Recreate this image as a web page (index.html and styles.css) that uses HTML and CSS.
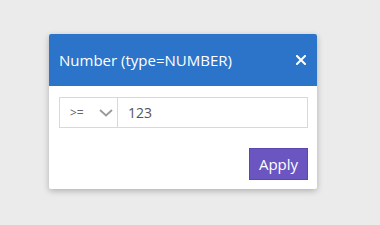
FILE: index.html
```html
<!DOCTYPE html>
<html>
<head>
<meta charset="utf-8">
<link rel="stylesheet" href="styles.css">
</head>
<body>
<div class="dialog">
  <div class="header">
    <span class="title">Number (type=NUMBER)</span>
    <svg class="close" width="10" height="10" viewBox="0 0 10 10"><path d="M1 1L9 9M9 1L1 9" stroke="#fff" stroke-width="2" stroke-linecap="square"/></svg>
  </div>
  <div class="content">
    <div class="field">
      <div class="select">
        <span class="op">&gt;=</span>
        <svg class="chev" width="14" height="8" viewBox="0 0 14 8"><path d="M1 1L7 6.5L13 1" fill="none" stroke="#999" stroke-width="1.8"/></svg>
      </div>
      <div class="value">123</div>
    </div>
    <div class="actions">
      <button class="apply">Apply</button>
    </div>
  </div>
</div>
</body>
</html>
```
FILE: styles.css
```css
html, body { margin: 0; padding: 0; }
body {
  background: #ebebeb;
  width: 380px;
  height: 225px;
  font-family: "Open Sans", "Noto Sans", sans-serif;
  overflow: hidden;
}
.dialog {
  margin: 34px 0 0 49px;
  width: 268px;
  background: #fff;
  box-shadow: 0 2px 6px rgba(0,0,0,0.25);
  border-radius: 2px;
}
.header {
  height: 52px;
  background: #2b74c9;
  display: flex;
  align-items: center;
  justify-content: space-between;
  padding: 0 11px 0 10px;
  border-radius: 2px 2px 0 0;
}
.title {
  color: #fff;
  font-size: 15px;
  line-height: 20px;
}
.close { display: block; }
.content {
  padding: 11px 9px 9px 10px;
}
.field {
  display: flex;
  height: 31px;
  border: 1px solid #d9d9d9;
  box-sizing: border-box;
}
.select {
  width: 58px;
  border-right: 1px solid #d9d9d9;
  display: flex;
  align-items: center;
  padding-left: 10px;
  gap: 15px;
  box-sizing: border-box;
}
.op {
  color: #666;
  font-size: 12px;
}
.chev { display: block; }
.value {
  display: flex;
  align-items: center;
  padding-left: 10px;
  font-size: 14px;
  color: #555;
}
.actions {
  display: flex;
  justify-content: flex-end;
  margin-top: 20px;
}
.apply {
  width: 59px;
  height: 32px;
  background: #6a55c1;
  border: 1px solid #5b47b0;
  color: #fff;
  font-family: "Open Sans", "Noto Sans", sans-serif;
  font-size: 15px;
  padding: 0;
  border-radius: 0;
}
```
